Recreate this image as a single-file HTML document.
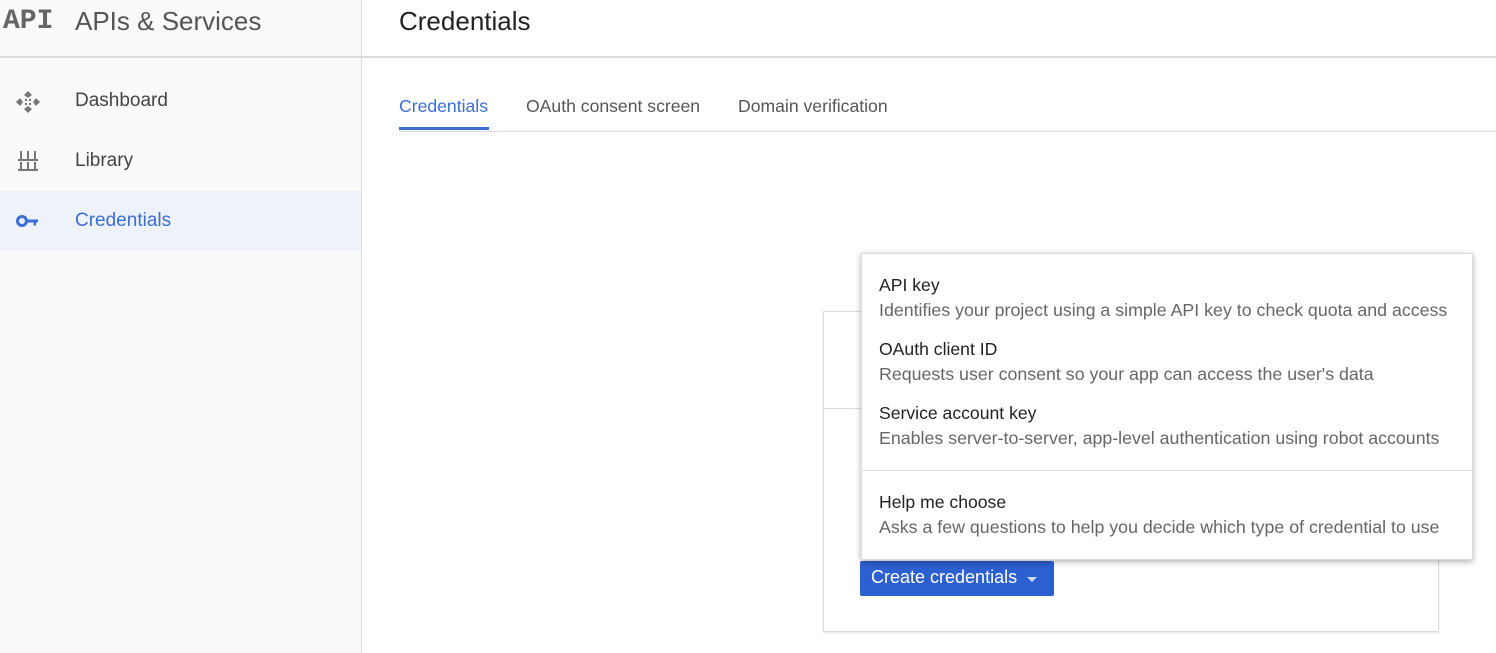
<!DOCTYPE html>
<html><head><style>
*{margin:0;padding:0;box-sizing:border-box}
body{width:1496px;height:653px;overflow:hidden;background:#fff;font-family:"Liberation Sans",sans-serif;position:relative;color:#333}
.side{position:absolute;left:0;top:0;width:362px;height:653px;background:#fafafa;border-right:1px solid #ddd}
.hdr{position:absolute;left:0;top:0;width:1496px;height:58px;border-bottom:2px solid #ddd}
.a{position:absolute}
.nav{position:absolute;left:0;width:361px;height:60px;font-size:19px;color:#444}
.nav span{position:absolute;left:75px;top:19px}
.dd{position:absolute;left:861px;top:253px;width:612px;height:307px;background:#fff;box-shadow:0 2px 6px rgba(0,0,0,.3);border:1px solid #ddd}
.it{position:absolute;left:17px}
.t{font-size:17.6px;color:#222;white-space:nowrap}
.d{font-size:17.8px;color:#666;margin-top:4px;white-space:nowrap}
</style></head><body>
<div class="side"></div>
<div class="hdr"></div>
<div class="a" style="left:3px;top:6px;font-family:'Liberation Mono',monospace;font-weight:bold;font-size:28px;color:#666;letter-spacing:0px">API</div>
<div class="a" style="left:75px;top:6px;font-size:26px;color:#555">APIs &amp; Services</div>
<div class="a" style="left:399px;top:6px;font-size:26px;color:#222">Credentials</div>
<div class="nav" style="top:71px"><svg class="a" style="left:16px;top:20px" width="24" height="22" viewBox="0 0 24 22" fill="#777"><path d="M12 0l4 4-4 3-4-3zM12 22l4-4-4-3-4 3zM0 11l4-4 3 4-3 4zM24 11l-4-4-3 4 3 4z"/><circle cx="10" cy="9" r="1.2"/><circle cx="14" cy="9" r="1.2"/><circle cx="10" cy="13" r="1.2"/><circle cx="14" cy="13" r="1.2"/></svg><span>Dashboard</span></div>
<div class="nav" style="top:131px"><svg class="a" style="left:18px;top:20px" width="20" height="20" viewBox="0 0 20 20" fill="#777"><rect x="2" y="0" width="2" height="8"/><rect x="9" y="0" width="2" height="8"/><rect x="16" y="0" width="2" height="8"/><rect x="0" y="8" width="20" height="2"/><rect x="2" y="11" width="2" height="7"/><rect x="9" y="11" width="2" height="7"/><rect x="16" y="11" width="2" height="7"/><rect x="0" y="18" width="20" height="2"/></svg><span>Library</span></div>
<div class="nav" style="top:191px;background:#eef2fa;color:#3b6fd4"><svg class="a" style="left:16px;top:23px" width="24" height="14" viewBox="0 0 24 14"><circle cx="6" cy="7" r="4.5" fill="none" stroke="#3b6fd4" stroke-width="3"/><path d="M10 5.5h12v3h-2v3h-2.5v-3H10z" fill="#3b6fd4"/></svg><span>Credentials</span></div>
<div class="a" style="left:399px;top:96px;font-size:17.6px;color:#3b6fd4">Credentials</div>
<div class="a" style="left:399px;top:127px;width:90px;height:3px;background:#3b6fd4"></div>
<div class="a" style="left:526px;top:96px;font-size:17.6px;color:#555">OAuth consent screen</div>
<div class="a" style="left:738px;top:96px;font-size:17.6px;color:#555">Domain verification</div>
<div class="a" style="left:399px;top:131px;width:1097px;height:1px;background:#ddd"></div>
<div class="a" style="left:823px;top:311px;width:616px;height:321px;border:1px solid #ddd;box-shadow:0 1px 2px rgba(0,0,0,.1)"></div>
<div class="a" style="left:823px;top:408px;width:40px;height:1px;background:#ddd"></div>
<div class="a" style="left:860px;top:561px;width:194px;height:35px;background:#2c5fcf;border-radius:2px;color:#fff;font-size:18px;padding:6px 0 0 11px;white-space:nowrap">Create credentials <svg width="12" height="8" style="margin-left:4px" viewBox="0 0 12 8"><path d="M1 2h10L6 7z" fill="#cfdcf5"/></svg></div>
<div class="dd">
<div class="it" style="top:21px"><div class="t">API key</div><div class="d">Identifies your project using a simple API key to check quota and access</div></div>
<div class="it" style="top:85px"><div class="t">OAuth client ID</div><div class="d">Requests user consent so your app can access the user's data</div></div>
<div class="it" style="top:149px"><div class="t">Service account key</div><div class="d">Enables server-to-server, app-level authentication using robot accounts</div></div>
<div class="a" style="left:0;top:216px;width:610px;height:1px;background:#ddd"></div>
<div class="it" style="top:238px"><div class="t">Help me choose</div><div class="d">Asks a few questions to help you decide which type of credential to use</div></div>
</div>
</body></html>
